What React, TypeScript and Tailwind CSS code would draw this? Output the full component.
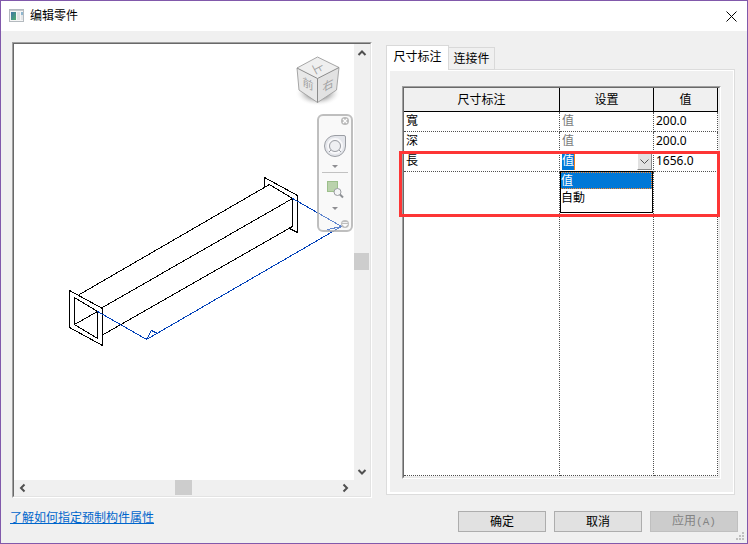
import { useState } from 'react'

interface DimensionRow {
  name: string
  value: string
}

const readOnlyRows: DimensionRow[] = [
  { name: '寬', value: '200.0' },
  { name: '深', value: '200.0' },
]

const modes = ['值', '自動']

const cell = 'border-r border-b border-dotted border-[#505050] p-0 pl-[2px] text-left font-normal whitespace-nowrap'
const headCell = 'border-r border-b border-black bg-[#f0f0f0] p-0 text-center font-normal'
const pushButton = 'h-[21px] w-[88px] border border-[#adadad] bg-[#e1e1e1] text-center leading-[18px]'

function AppIcon() {
  return (
    <svg width="16" height="14" viewBox="0 0 16 14" aria-hidden="true">
      <defs>
        <linearGradient id="appIcon" x1="0" y1="0" x2="1" y2="1">
          <stop offset="0" stopColor="#3f74a8" />
          <stop offset="1" stopColor="#4fae6c" />
        </linearGradient>
      </defs>
      <rect x="0.5" y="0.5" width="14" height="12" fill="#f6f6f6" stroke="#b4babf" />
      <rect x="1" y="1" width="13" height="1" fill="#c3c8cc" />
      <rect x="2" y="3" width="5" height="8" fill="url(#appIcon)" />
      <rect x="8" y="3" width="3" height="8" fill="#dfe2e4" />
      <rect x="12" y="3" width="2" height="3" fill="#8fb7cf" />
      <rect x="12" y="6" width="2" height="5" fill="#e4e6e8" />
    </svg>
  )
}

function ViewCube() {
  return (
    <g>
      <ellipse cx="318" cy="93" rx="23" ry="13" fill="url(#cubeShadow)" />
      <path d="M317.5 57 L339 67.5 L317.5 78.5 L297 68 Z" fill="#efefef" />
      <path d="M297 68 L317.5 78.5 V102.5 L299 90 Z" fill="#e8e8e8" />
      <path d="M339 67.5 L317.5 78.5 V102.5 L336.5 90 Z" fill="#e2e2e2" />
      <path
        d="M317.5 57 L339 67.5 L336.5 90 L317.5 102.5 L299 90 L297 68 Z"
        fill="none"
        stroke="#a6a6a6"
      />
      <path d="M297 68 L317.5 78.5 L339 67.5 M317.5 78.5 V102.5" fill="none" stroke="#8c8c8c" />
      <g fill="#a0a0a0" fontSize="11" textAnchor="middle" className="font-['Noto_Sans_CJK_SC',sans-serif]">
        <text transform="translate(318 68) rotate(62)" y="4">上</text>
        <text transform="translate(308 84) skewY(28)" y="4">前</text>
        <text transform="translate(328 85) skewY(-28)" y="4">右</text>
      </g>
    </g>
  )
}

function NavigationBar() {
  return (
    <g>
      <rect x="318" y="115" width="34" height="116" rx="5" fill="#f0f0f0" fillOpacity="0.4" stroke="#b4b4b4" strokeOpacity="0.85" strokeWidth="2" />
      <circle cx="345" cy="121" r="4" fill="#b9b9b9" />
      <path d="M343 119 l4 4 M347 119 l-4 4" stroke="#fff" strokeWidth="1.2" />
      <path
        d="M335 135.5 H344 Q345.5 135.5 345.5 137 V146 A10.500 10.500 0 1 1 335 135.5 Z"
        fill="#e4e6eb"
        stroke="#9b9ea4"
      />
      <circle cx="335" cy="146" r="7" fill="none" stroke="#f8f8fa" strokeWidth="2" />
      <circle cx="335" cy="146" r="5.5" fill="#eeeff2" stroke="#9b9ea4" />
      <path d="M329 152 l2 -2 M341 152 l-2 -2" stroke="#9b9ea4" />
      <path d="M332 165 h6 l-3 3 Z" fill="#8e8e92" />
      <path d="M322 172.5 H348" stroke="#c2c2c2" />
      <rect x="327.5" y="181.5" width="10" height="10" fill="#bad2ac" stroke="#9cbf8b" />
      <circle cx="337.5" cy="192" r="3.5" fill="#f4f5f6" stroke="#999ca0" />
      <path d="M340 194.5 l3 3" stroke="#8e9195" strokeWidth="2" />
      <path d="M332 207 h6 l-3 3 Z" fill="#8e8e92" />
      <circle cx="345" cy="224" r="4" fill="#b4b4b4" fillOpacity="0.85" />
      <path d="M342.5 222.5 h5 M342.5 224.5 h5 l-2.5 2 Z" stroke="#fff" strokeWidth="0.8" fill="#fff" />
    </g>
  )
}

// Isometric duct with its length dimension in blue
function DuctDrawing() {
  return (
    <svg width="340" height="436" viewBox="14 44 340 436" role="img" aria-label="零件预览">
      <defs>
        <radialGradient id="cubeShadow">
          <stop offset="0.5" stopColor="#b4b4b4" />
          <stop offset="1" stopColor="#fff" stopOpacity="0" />
        </radialGradient>
      </defs>
      <g fill="none" stroke="#000" shapeRendering="crispEdges">
        <path d="M264.5 187.5 V177.5 L297.5 195.5 V232.5 L288.5 228" />
        <path d="M269.5 184.5 L292.5 198.5 V226.5 L289.5 228" />
        <path d="M264.5 187.5 L269.5 184.5 L79.5 294.5" />
        <path d="M292.5 198.5 L102.5 307.5 M292.5 226.5 L102.5 335" />
        <path d="M69.5 290.5 L102.5 308.5 V345.5 L69.5 327.5 Z" />
        <path d="M74.5 297.5 L97.5 311.5 V338.5 L74.5 324.5 Z M74.5 324.5 L97.5 311.5" />
      </g>
      <g fill="none" stroke="#0040b8" shapeRendering="crispEdges">
        <path d="M97.5 311.5 L146.5 339.5 L341.5 226.5 L292.5 198.5" />
        <path d="M146.5 339.5 L151.5 330.5 L157.5 333.5" />
        <path d="M341.5 226.5 L327.5 229.5 L332.5 232.5" />
      </g>
      <ViewCube />
      <NavigationBar />
    </svg>
  )
}

function Chevron({ d }: { d: string }) {
  return (
    <svg width="10" height="10" viewBox="0 0 10 10" fill="none" stroke="#505050" strokeWidth="2" aria-hidden="true">
      <path d={d} />
    </svg>
  )
}

function Preview() {
  return (
    <div className="border border-t-[#a0a0a0] border-r-white border-b-white border-l-[#a0a0a0]">
      <div className="grid h-full grid-cols-[1fr_16px] grid-rows-[1fr_16px] border border-t-[#696969] border-r-[#e3e3e3] border-b-[#e3e3e3] border-l-[#696969]">
        <div className="overflow-hidden bg-white">
          <DuctDrawing />
        </div>
        <div className="flex flex-col items-center bg-[#f0f0f0]">
          <button aria-label="向上滚动" className="flex h-[17px] items-center pr-px"><Chevron d="M1.5 7 L5 3.5 L8.5 7" /></button>
          <div className="flex-[192]" />
          <div className="h-[17px] w-full border-r border-[#f0f0f0] bg-[#cdcdcd]" />
          <div className="flex-[193]" />
          <button aria-label="向下滚动" className="flex h-[17px] items-center pr-px"><Chevron d="M1.5 3 L5 6.5 L8.5 3" /></button>
        </div>
        <div className="flex items-center bg-[#f0f0f0]">
          <button aria-label="向左滚动" className="flex w-[17px] justify-center"><Chevron d="M6.5 1.5 L3 5 L6.5 8.5" /></button>
          <div className="flex-[144]" />
          <div className="h-full w-[17px] border-b border-[#f0f0f0] bg-[#cdcdcd]" />
          <div className="flex-[145]" />
          <button aria-label="向右滚动" className="flex w-[17px] justify-center"><Chevron d="M2.5 1.5 L6 5 L2.5 8.5" /></button>
        </div>
        <div className="bg-[#f0f0f0]" />
      </div>
    </div>
  )
}

function ModePicker() {
  const [mode, setMode] = useState(modes[0])

  return (
    <div className="relative h-[19px]">
      <select
        aria-label="長 设置"
        value={mode}
        onChange={(e) => setMode(e.target.value)}
        className="block h-[18px] w-full appearance-none bg-[linear-gradient(to_right,#0078d7_12px,#f08020_12px,#f08020_13px,white_13px)] leading-[18px] text-white outline-none"
      >
        {modes.map((m) => (
          <option key={m} value={m}>{m}</option>
        ))}
      </select>
      <span className="pointer-events-none absolute top-px right-px flex h-[17px] w-[15px] items-center justify-center border border-white border-r-[#8a8a8a] border-b-[#8a8a8a] bg-[#e1e1e1]">
        <svg width="9" height="6" viewBox="0 0 9 6" fill="none" stroke="#505050" aria-hidden="true">
          <path d="M0.5 0.5 L4.5 4.5 L8.5 0.5" />
        </svg>
      </span>
      <ul role="listbox" className="absolute top-[19px] right-0 -left-[2px] z-10 h-[42px] border border-black bg-white leading-[15px]">
        {modes.map((m) => (
          <li
            key={m}
            role="option"
            aria-selected={m === mode}
            onClick={() => setMode(m)}
            className={
              m === mode
                ? 'h-[17px] border border-l-0 border-dotted border-[#ff8728] bg-[#0078d7] text-white'
                : 'h-[17px] border border-l-0 border-transparent'
            }
          >
            {m}
          </li>
        ))}
      </ul>
    </div>
  )
}

function DimensionTable() {
  return (
    <div className="relative h-full">
      <div className="h-full border border-t-[#a0a0a0] border-r-white border-b-white border-l-[#a0a0a0]">
        <div className="h-full border border-t-[#696969] border-r-[#e9e9e9] border-b-[#e9e9e9] border-l-[#696969] pr-px pb-px">
          <table className="h-full w-full table-fixed border-separate border-spacing-0 bg-white">
            <colgroup>
              <col />
              <col className="w-[94px]" />
              <col className="w-[64px]" />
            </colgroup>
            <thead>
              <tr className="h-[24px]">
                <th scope="col" className={headCell}>尺寸标注</th>
                <th scope="col" className={headCell}>设置</th>
                <th scope="col" className={headCell}>值</th>
              </tr>
            </thead>
            <tbody className="leading-[18px]">
              {readOnlyRows.map((row) => (
                <tr key={row.name} className="h-[20px]">
                  <th scope="row" className={`${cell} align-top`}>{row.name}</th>
                  <td className={`${cell} align-top text-[#787878]`}>值</td>
                  <td className={`${cell} align-top`}>{row.value}</td>
                </tr>
              ))}
              <tr className="h-[20px]">
                <th scope="row" className={`${cell} align-top`}>長</th>
                <td className={cell}><ModePicker /></td>
                <td className={`${cell} align-top`}>1656.0</td>
              </tr>
              <tr>
                <td className={cell} />
                <td className={cell} />
                <td className={cell} />
              </tr>
            </tbody>
          </table>
        </div>
      </div>
      <div className="pointer-events-none absolute top-[65px] right-px -left-[3px] z-20 h-[66px] border-3 border-[#fd3535]" />
    </div>
  )
}

export default function App() {
  return (
    <div className="flex h-screen min-h-96 flex-col border border-[#8159ab] bg-[#f0f0f0] font-['Noto_Sans','Noto_Sans_CJK_SC',sans-serif] text-[12px] leading-[16px] text-black">
      <header className="flex h-[30px] shrink-0 items-center bg-white pr-[10px] pl-2">
        <AppIcon />
        <h1 className="ml-[5px] flex-1">编辑零件</h1>
        <button aria-label="关闭">
          <svg width="11" height="11" viewBox="0 0 11 11" stroke="#000" aria-hidden="true">
            <path d="M0.5 0.5 L10.5 10.5 M10.5 0.5 L0.5 10.5" />
          </svg>
        </button>
      </header>

      <main className="grid min-h-0 flex-1 grid-cols-[360fr_349fr] grid-rows-[minmax(0,1fr)] gap-[14px] pt-[11px] pr-3 pl-[11px]">
        <Preview />

        <section className="flex min-h-0 flex-col py-[3px]">
          <div role="tablist" className="z-10 -mb-px flex items-end">
            <button role="tab" aria-selected="true" className="h-[25px] w-[63px] border border-b-0 border-[#d9d9d9] bg-white pb-[2px]">
              尺寸标注
            </button>
            <button role="tab" aria-selected="false" className="h-[23px] w-[46px] border border-l-0 border-[#d9d9d9]">
              连接件
            </button>
          </div>
          <div role="tabpanel" className="min-h-0 flex-1 border border-[#dcdcdc] bg-white pt-px pr-px pb-[2px] pl-[3px]">
            <div className="h-full bg-[#f0f0f0] pt-[15px] pr-3 pb-[13px] pl-3">
              <DimensionTable />
            </div>
          </div>
        </section>
      </main>

      <footer className="relative flex shrink-0 items-start gap-2 pt-[13px] pr-[9px] pb-[11px] pl-[9px]">
        <a href="#properties" className="mr-auto -mt-px text-[#0066cc] underline">了解如何指定预制构件属性</a>
        <button className={pushButton}>确定</button>
        <button className={pushButton}>取消</button>
        <button disabled className="h-[21px] w-[88px] border border-[#bfbfbf] bg-[#cccccc] text-center leading-[18px] text-[#838383]">
          应用<span className="font-['Liberation_Mono',monospace] text-[11px]">(A)</span>
        </button>
        <svg width="9" height="9" viewBox="0 0 9 9" fill="#bfbfbf" className="absolute right-[2px] bottom-[2px]" aria-hidden="true">
          <path d="M6 0h2v2h-2z M3 3h2v2h-2z M6 3h2v2h-2z M0 6h2v2h-2z M3 6h2v2h-2z M6 6h2v2h-2z" />
        </svg>
      </footer>
    </div>
  )
}
